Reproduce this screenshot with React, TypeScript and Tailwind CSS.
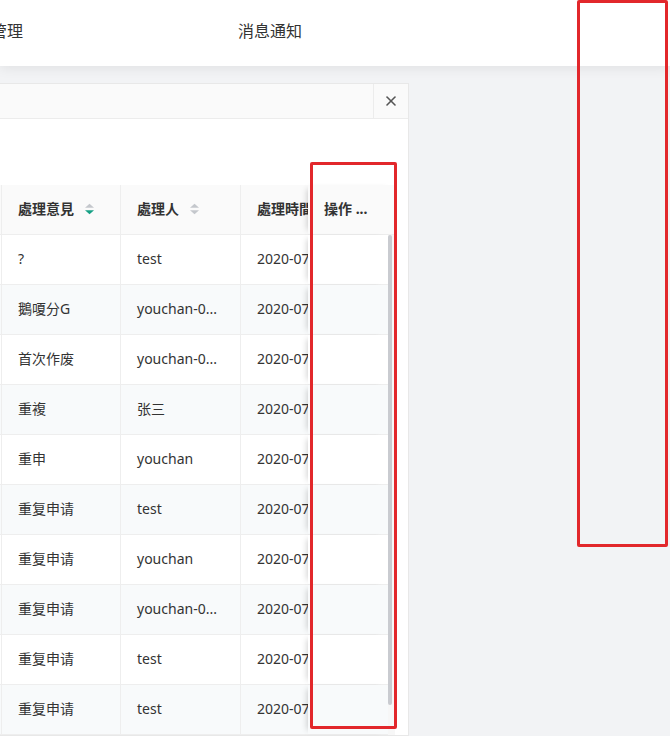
import { X } from "lucide-react";

const rows = [
  { opinion: "?", person: "test" },
  { opinion: "鵝嗄分G", person: "youchan-0..." },
  { opinion: "首次作废", person: "youchan-0..." },
  { opinion: "重複", person: "张三" },
  { opinion: "重申", person: "youchan" },
  { opinion: "重复申请", person: "test" },
  { opinion: "重复申请", person: "youchan" },
  { opinion: "重复申请", person: "youchan-0..." },
  { opinion: "重复申请", person: "test" },
  { opinion: "重复申请", person: "test" },
];

function SortIcon({ active }: { active?: boolean }) {
  return (
    <svg width="11" height="14" viewBox="0 0 11 14" className="ml-[10px]">
      <path d="M1 5.8 L5.5 1.8 L10 5.8 Z" fill="#c4c7cc" />
      <path d="M1 8.2 L5.5 12.2 L10 8.2 Z" fill={active ? "#16a085" : "#c4c7cc"} />
    </svg>
  );
}

export default function App() {
  return (
    <div
      className="relative w-[670px] h-[736px] overflow-hidden bg-[#f2f3f5] text-[#333]"
      style={{ fontFamily: '"Noto Sans", "Noto Sans CJK SC", sans-serif' }}
    >
      {/* Top nav */}
      <div className="relative z-10 h-[66px] bg-white flex items-center pb-[4px] shadow-[0_2px_12px_rgba(0,0,0,0.08)] text-[16px]">
        <span className="ml-[-9px]">管理</span>
        <span className="ml-[215px]">消息通知</span>
      </div>

      {/* Panel */}
      <div className="mt-[17px] w-[409px] bg-white border border-l-0 border-[#e8e8e8] flex flex-col">
        <div className="h-[35px] bg-[#fafafa] border-b border-[#ececec] flex justify-end">
          <button className="w-[35px] h-full border-l border-[#ececec] flex items-center justify-center text-[#555]">
            <X size={16} strokeWidth={2.4} />
          </button>
        </div>

        <div className="pt-[66px] pr-[13px]">
          {/* Table header */}
          <div className="flex h-[50px] bg-[#fafafa] border-b border-[#eeeeee] text-[14px] font-bold">
            <div className="flex w-[308px] overflow-hidden">
              <div className="w-[2px] shrink-0 border-r border-[#eeeeee]" />
              <div className="w-[119px] shrink-0 pl-4 pb-[2px] flex items-center border-r border-[#eeeeee]">
                處理意見
                <SortIcon active />
              </div>
              <div className="w-[120px] shrink-0 pl-4 pb-[2px] flex items-center border-r border-[#eeeeee]">
                處理人
                <SortIcon />
              </div>
              <div className="w-[140px] shrink-0 pl-4 pb-[2px] flex items-center whitespace-nowrap">
                處理時間
              </div>
            </div>
            <div className="flex-1 pl-4 pb-[2px] flex items-center bg-[#fafafa] shadow-[-5px_0_6px_-4px_rgba(0,0,0,0.18)]">
              操作 ...
            </div>
          </div>

          {/* Table body */}
          <div className="flex text-[14px]">
            <div className="flex-1">
              {rows.map((r, i) => (
                <div
                  key={i}
                  className={`flex h-[50px] border-b border-[#eeeeee] ${i % 2 === 1 ? "bg-[#f8fafb]" : "bg-white"}`}
                >
                  <div className="flex w-[308px] overflow-hidden">
                    <div className="w-[2px] shrink-0 border-r border-[#eeeeee]" />
                    <div className="w-[119px] shrink-0 pl-4 pb-[3px] flex items-center border-r border-[#eeeeee]">
                      {r.opinion}
                    </div>
                    <div className="w-[120px] shrink-0 pl-4 pb-[3px] flex items-center border-r border-[#eeeeee]">
                      {r.person}
                    </div>
                    <div className="w-[140px] shrink-0 pl-4 pb-[3px] flex items-center whitespace-nowrap">
                      2020-07-21 10:32
                    </div>
                  </div>
                  <div
                    className={`flex-1 shadow-[-5px_0_6px_-4px_rgba(0,0,0,0.18)] ${i % 2 === 1 ? "bg-[#f8fafb]" : "bg-white"}`}
                  />
                </div>
              ))}
            </div>
            <div className="w-[7px] bg-[#f7f7f7] flex justify-start">
              <div className="w-[4px] h-[470px] bg-[#c9cbd0] rounded-full" />
            </div>
          </div>
        </div>
      </div>

      {/* Annotation boxes */}
      <div className="absolute z-20 left-[310px] top-[162px] w-[87px] h-[567px] border-[3px] border-[#e2272b] rounded-[2px]" />
      <div className="absolute z-20 left-[577px] top-0 w-[91px] h-[547px] border-[3px] border-[#e2272b] rounded-[2px]" />
    </div>
  );
}
